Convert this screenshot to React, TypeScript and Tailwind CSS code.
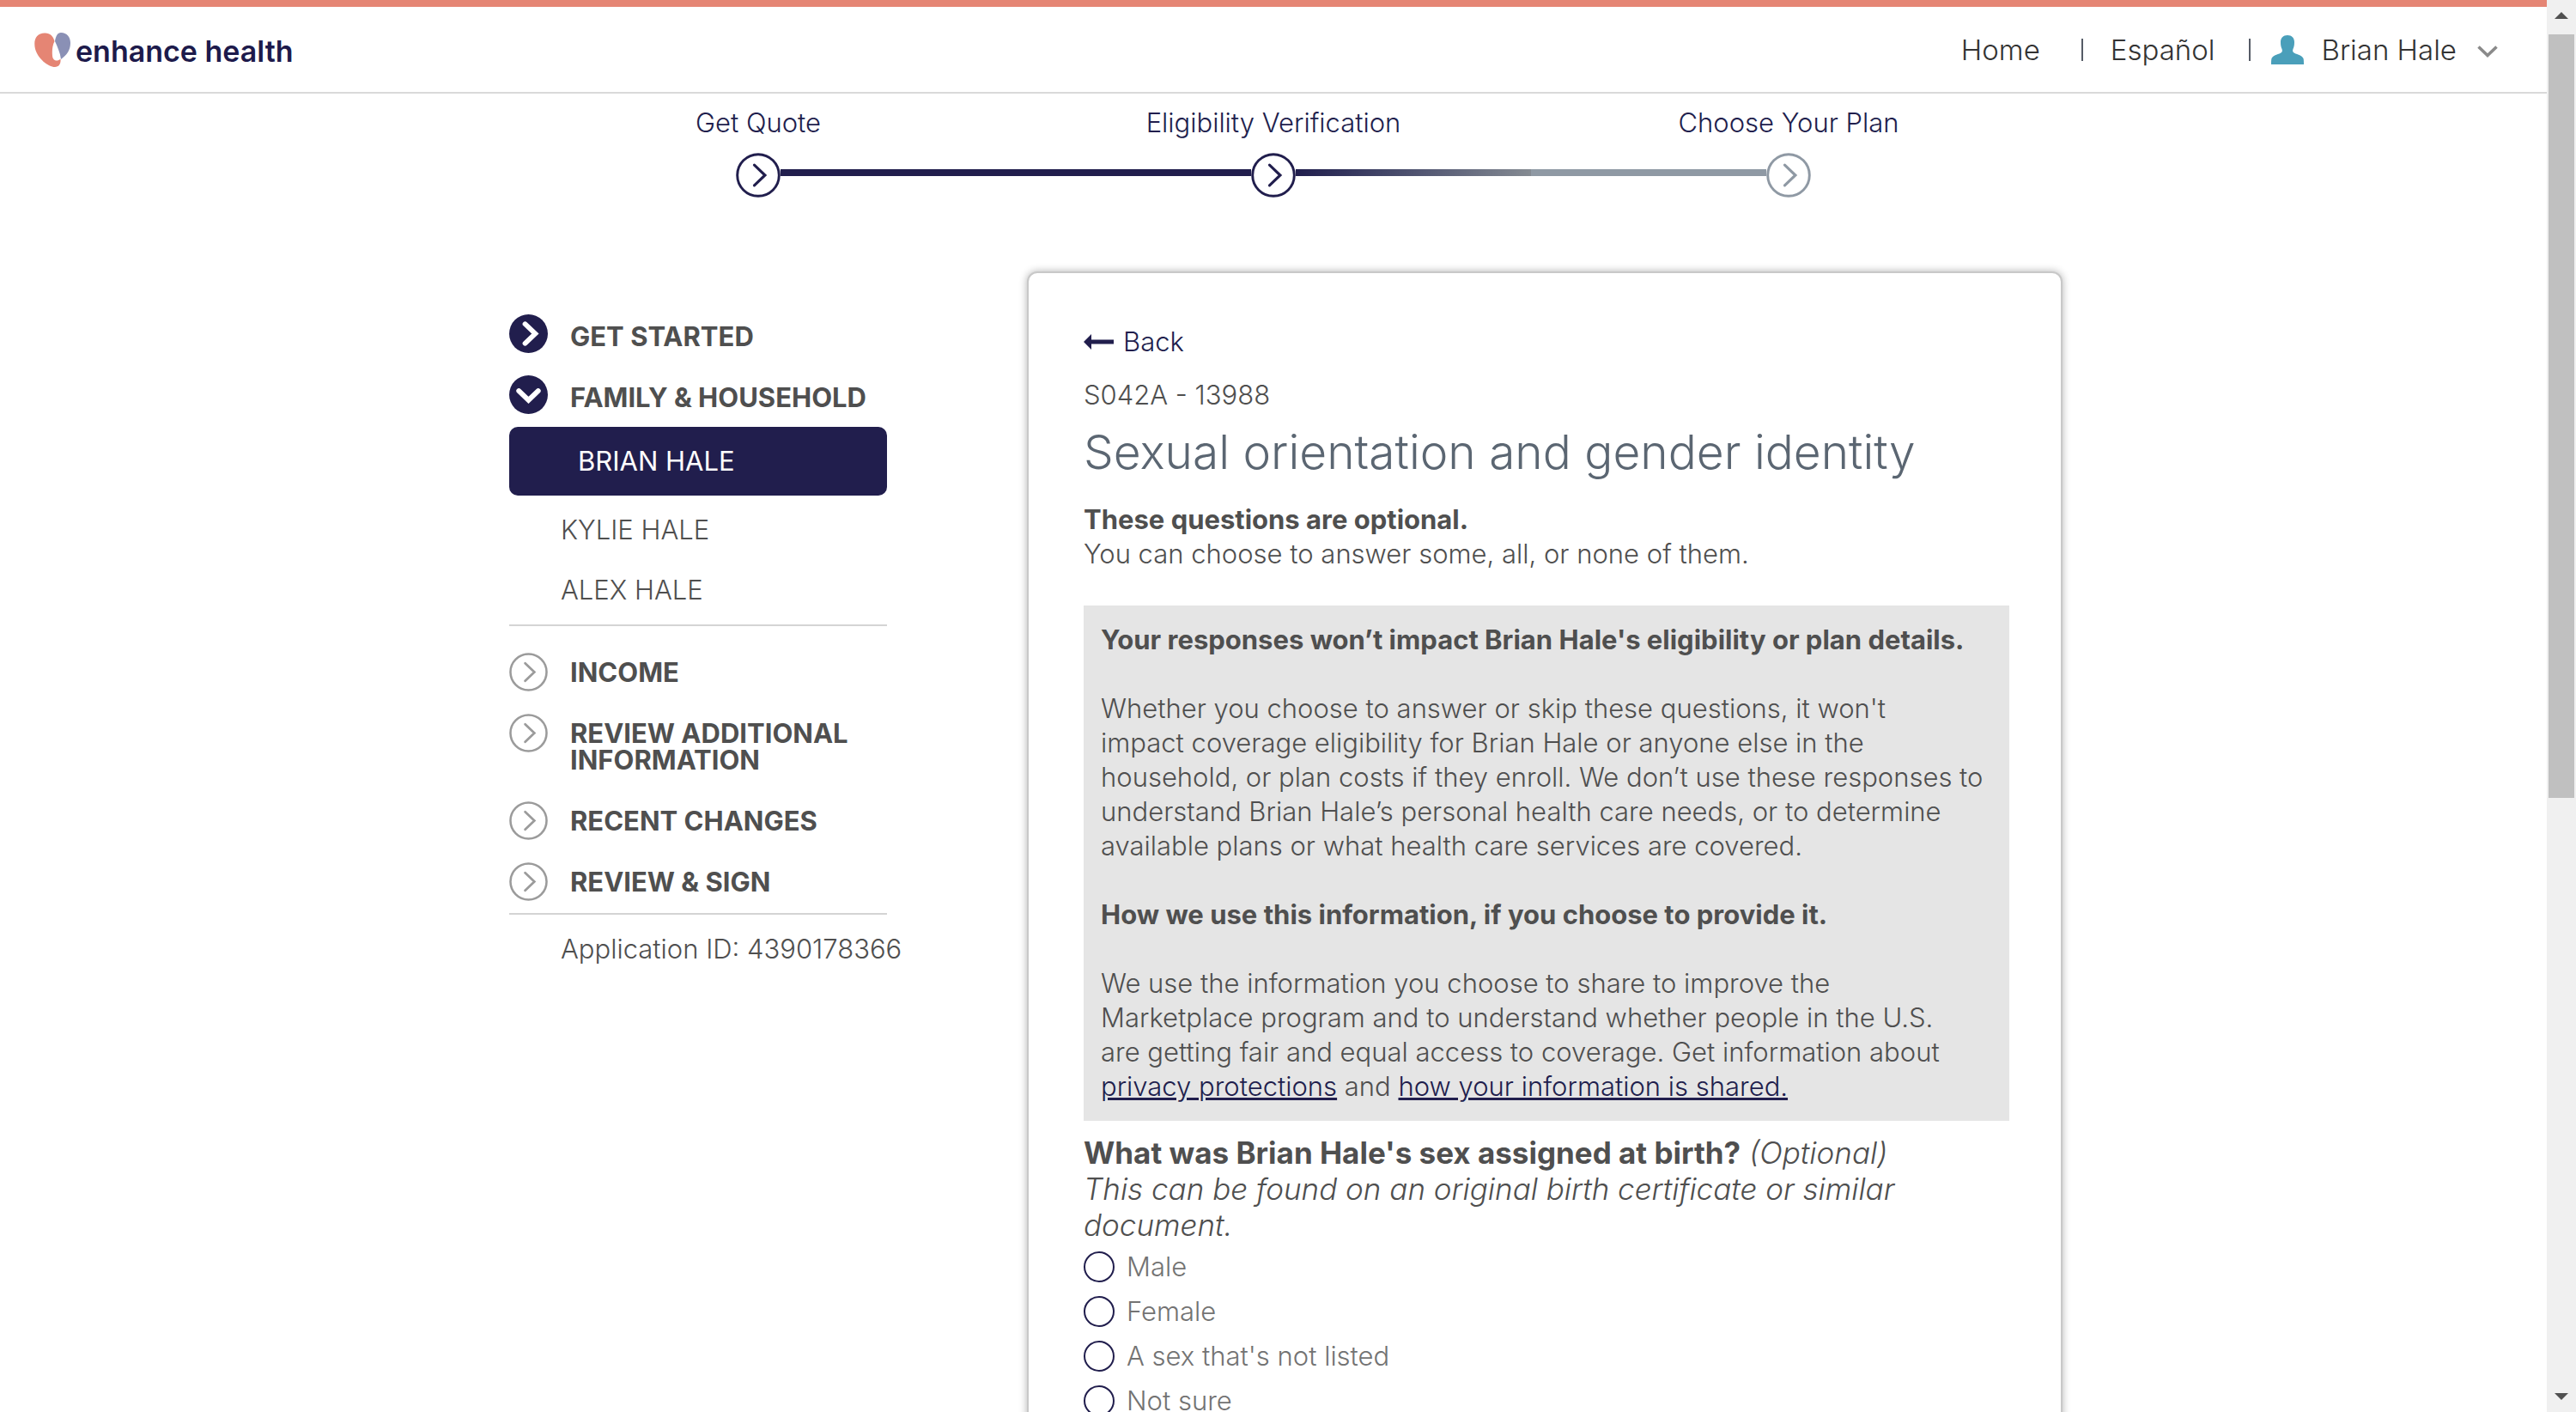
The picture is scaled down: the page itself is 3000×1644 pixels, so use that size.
import type { ReactNode } from "react";

function CircleChevron({ className, down = false, bold = false }: { className: string; down?: boolean; bold?: boolean }) {
  return (
    <svg viewBox="0 0 46 46" className={className} fill="none" aria-hidden="true">
      <circle cx="23" cy="23" r={bold ? 23 : 21.5} fill={bold ? "currentColor" : "none"} stroke={bold ? "none" : "currentColor"} strokeWidth="2.6" />
      <path
        d={down ? "M11.5 18.5 23 29.5l11.5-11" : bold ? "M19 11.5 31 23 19 34.5" : "M19 12.5 30 23 19 33.5"}
        stroke={bold ? "#fff" : "currentColor"}
        strokeWidth={bold ? 6 : 2.8}
        strokeLinecap="round"
        strokeLinejoin="miter"
      />
    </svg>
  );
}

function Logo() {
  return (
    <a href="#" className="flex items-center gap-[6px] text-[#1d1a4b]">
      <svg viewBox="0 0 42 40" className="h-10 w-[42px]" aria-hidden="true">
        <path
          d="M12 .5C18 .2 22 4 23.500 10C21 15 20.500 21 21 27C21.300 31 24 33 27 32.500C29 32 30 31 30.500 30.500C31 36 29 40 24 40C16 40 4 30 1 19C-1.500 8 2.500 .8 12 .5Z"
          fill="#e58574"
        />
        <path d="M31 0C38 0 42 5 42 12C42 20 38 26 31 31C30 23 27 17 24 10C25 4 27 0 31 0Z" fill="#8a90b5" />
      </svg>
      <span className="pt-1 text-[34px] leading-10 font-semibold">enhance health</span>
    </a>
  );
}

function Header() {
  return (
    <header className="flex h-[109px] items-center justify-between border-t-8 border-b-2 border-t-[#e58574] border-b-[#d9d9d9] pr-[57px] pl-10">
      <Logo />
      <nav className="flex items-center text-[33px] leading-10 font-light text-[#333]">
        <a href="#">Home</a>
        <span className="mr-8 ml-12 h-[26px] w-[2px] bg-[#555b66]" />
        <a href="#">Español</a>
        <span className="mr-6 ml-10 h-[26px] w-[2px] bg-[#555b66]" />
        <button type="button" className="flex items-center">
          <svg viewBox="0 0 38 34" className="mr-5 h-[34px] w-[38px]" fill="#4a9fba" aria-hidden="true">
            <path d="M19 0c5 0 8 3 8 8 0 4-.6 6-1.500 8-.6 2-.5 3 .5 4 2 2 10 3 11.500 7 .5 2 .5 4 .5 7H0c0-3 0-5 .5-7C2 23 10 22 12 20c1-1 1.100-2 .5-4C11.600 14 11 12 11 8c0-5 3-8 8-8Z" />
          </svg>
          Brian Hale
          <svg viewBox="0 0 24 14" className="mt-1 ml-6 h-[14px] w-6" fill="none" stroke="#8a8a8a" strokeWidth="3.6" aria-hidden="true">
            <path d="M1.500 1.500 12 11.500 22.500 1.500" />
          </svg>
        </button>
      </nav>
    </header>
  );
}

function Step({ label, muted = false }: { label: string; muted?: boolean }) {
  return (
    <li className="flex w-[52px] flex-col items-center gap-[15px]">
      <span className="text-[31px] leading-10 font-light whitespace-nowrap text-[#211e4d]">{label}</span>
      <CircleChevron className={muted ? "size-[52px] text-[#8f99a4]" : "size-[52px] text-[#211e4d]"} />
    </li>
  );
}

function Stepper() {
  return (
    <ol className="mx-auto mt-[14px] flex w-[1252px] items-start">
      <Step label="Get Quote" />
      <li aria-hidden="true" className="mt-[74px] h-2 flex-1 bg-[#211e4d]" />
      <Step label="Eligibility Verification" />
      <li aria-hidden="true" className="mt-[74px] flex h-2 flex-1">
        <span className="flex-1 bg-linear-to-r from-[#211e4d] to-[#858b92]" />
        <span className="flex-1 bg-[#8f99a4]" />
      </li>
      <Step label="Choose Your Plan" muted />
    </ol>
  );
}

function Section({ label, state = "todo" }: { label: string; state?: "done" | "open" | "todo" }) {
  const reached = state !== "todo";
  return (
    <a href="#" className="flex items-start gap-[26px]">
      <CircleChevron
        bold={reached}
        down={state === "open"}
        className={reached ? "size-[45px] shrink-0 text-[#211e4d]" : "size-[45px] shrink-0 text-[#9b9b9b]"}
      />
      <span className={(reached ? "pt-[10px] pb-1" : "py-[7px]") + " text-[31px] leading-[31px] font-bold text-[#4f4f4f]"}>{label}</span>
    </a>
  );
}

function Sidebar() {
  return (
    <aside className="mt-[50px] w-[440px] shrink-0 text-[31px] text-[#4f4f4f]">
      <div className="flex flex-col gap-[26px]">
        <Section label="GET STARTED" state="done" />
        <Section label="FAMILY & HOUSEHOLD" state="open" />
      </div>
      <a href="#" className="mt-[15px] block rounded-[10px] bg-[#211e4d] py-5 pl-20 leading-10 font-normal text-white">
        BRIAN HALE
      </a>
      <div className="flex flex-col gap-[30px] border-b-2 border-[#d4d4d4] pt-5 pb-5 pl-[60px] leading-10 font-light">
        <a href="#">KYLIE HALE</a>
        <a href="#">ALEX HALE</a>
      </div>
      <div className="flex flex-col gap-[26px] border-b-2 border-[#d4d4d4] pt-[31px] pb-[14px]">
        <Section label="INCOME" />
        <Section label="REVIEW ADDITIONAL INFORMATION" />
        <Section label="RECENT CHANGES" />
        <Section label="REVIEW & SIGN" />
      </div>
      <p className="mt-5 pl-[60px] leading-10 font-light whitespace-nowrap">Application ID: 4390178366</p>
    </aside>
  );
}

function Lines({ children }: { children: ReactNode }) {
  return <p className="whitespace-nowrap">{children}</p>;
}

function Question() {
  const options = ["Male", "Female", "A sex that's not listed", "Not sure"];
  return (
    <fieldset className="mt-4">
      <legend className="text-[35px] leading-[42px] whitespace-nowrap">
        <strong className="font-bold">What was Brian Hale's sex assigned at birth?</strong>{" "}
        <em>
          (Optional)
          <br />
          This can be found on an original birth certificate or similar
          <br />
          document.
        </em>
      </legend>
      <div className="mt-2 flex flex-col gap-3">
        {options.map((option) => (
          <label key={option} className="flex items-center gap-[14px] text-[#737373]">
            <input type="radio" name="birth-sex" className="size-9 appearance-none rounded-full border-2 border-[#211e4d] bg-white checked:bg-[#211e4d]" />
            {option}
          </label>
        ))}
      </div>
    </fieldset>
  );
}

function Card() {
  return (
    <main className="w-[1206px] shrink-0 rounded-[12px] border-2 border-[#c8c8c8] bg-white pt-[60px] pr-[60px] pb-24 pl-[64px] text-[31px] leading-10 font-light text-[#4f4f4f] shadow-[0_0_10px_rgba(0,0,0,0.3)]">
      <a href="#" className="flex w-fit items-center gap-[11px] text-[#211e4d]">
        <svg viewBox="0 0 35 18" className="h-[18px] w-[35px]" fill="currentColor" aria-hidden="true">
          <path d="M0 9 9 0v6.500h26v5H9V18Z" />
        </svg>
        Back
      </a>
      <p className="mt-[22px]">S042A - 13988</p>
      <h1 className="mt-[14px] text-[55px] leading-[64px] text-[#5b6672]">Sexual orientation and gender identity</h1>
      <p className="mt-[27px] font-bold">These questions are optional.</p>
      <p>You can choose to answer some, all, or none of them.</p>
      <section className="mt-10 flex flex-col gap-10 bg-[#e5e5e5] p-5">
        <p className="font-bold whitespace-nowrap">Your responses won’t impact Brian Hale's eligibility or plan details.</p>
        <Lines>
          Whether you choose to answer or skip these questions, it won't
          <br />
          impact coverage eligibility for Brian Hale or anyone else in the
          <br />
          household, or plan costs if they enroll. We don’t use these responses to
          <br />
          understand Brian Hale’s personal health care needs, or to determine
          <br />
          available plans or what health care services are covered.
        </Lines>
        <p className="font-bold">How we use this information, if you choose to provide it.</p>
        <Lines>
          We use the information you choose to share to improve the
          <br />
          Marketplace program and to understand whether people in the U.S.
          <br />
          are getting fair and equal access to coverage. Get information about
          <br />
          <a href="#" className="text-[#211e4d] underline">
            privacy protections
          </a>{" "}
          and{" "}
          <a href="#" className="text-[#211e4d] underline">
            how your information is shared.
          </a>
        </Lines>
      </section>
      <Question />
    </main>
  );
}

function ScrollBar() {
  return (
    <div aria-hidden="true" className="flex w-[34px] shrink-0 flex-col items-center justify-between bg-[#f0f0f0] py-[14px]">
      <svg viewBox="0 0 16 8" className="h-2 w-4" fill="#505050">
        <path d="M0 8 8 0l8 8Z" />
      </svg>
      <div className="mt-[18px] mb-auto h-[55%] w-[30px] bg-[#c0c0c0]" />
      <svg viewBox="0 0 16 8" className="h-2 w-4" fill="#505050">
        <path d="M0 0h16L8 8Z" />
      </svg>
    </div>
  );
}

export default function App() {
  return (
    <div className="flex h-screen overflow-hidden bg-white font-['Inter',sans-serif]">
      <div className="min-w-0 flex-1 overflow-hidden">
        <Header />
        <Stepper />
        <div className="mt-[86px] flex items-start justify-center gap-[163px] pl-[29px]">
          <Sidebar />
          <Card />
        </div>
      </div>
      <ScrollBar />
    </div>
  );
}
